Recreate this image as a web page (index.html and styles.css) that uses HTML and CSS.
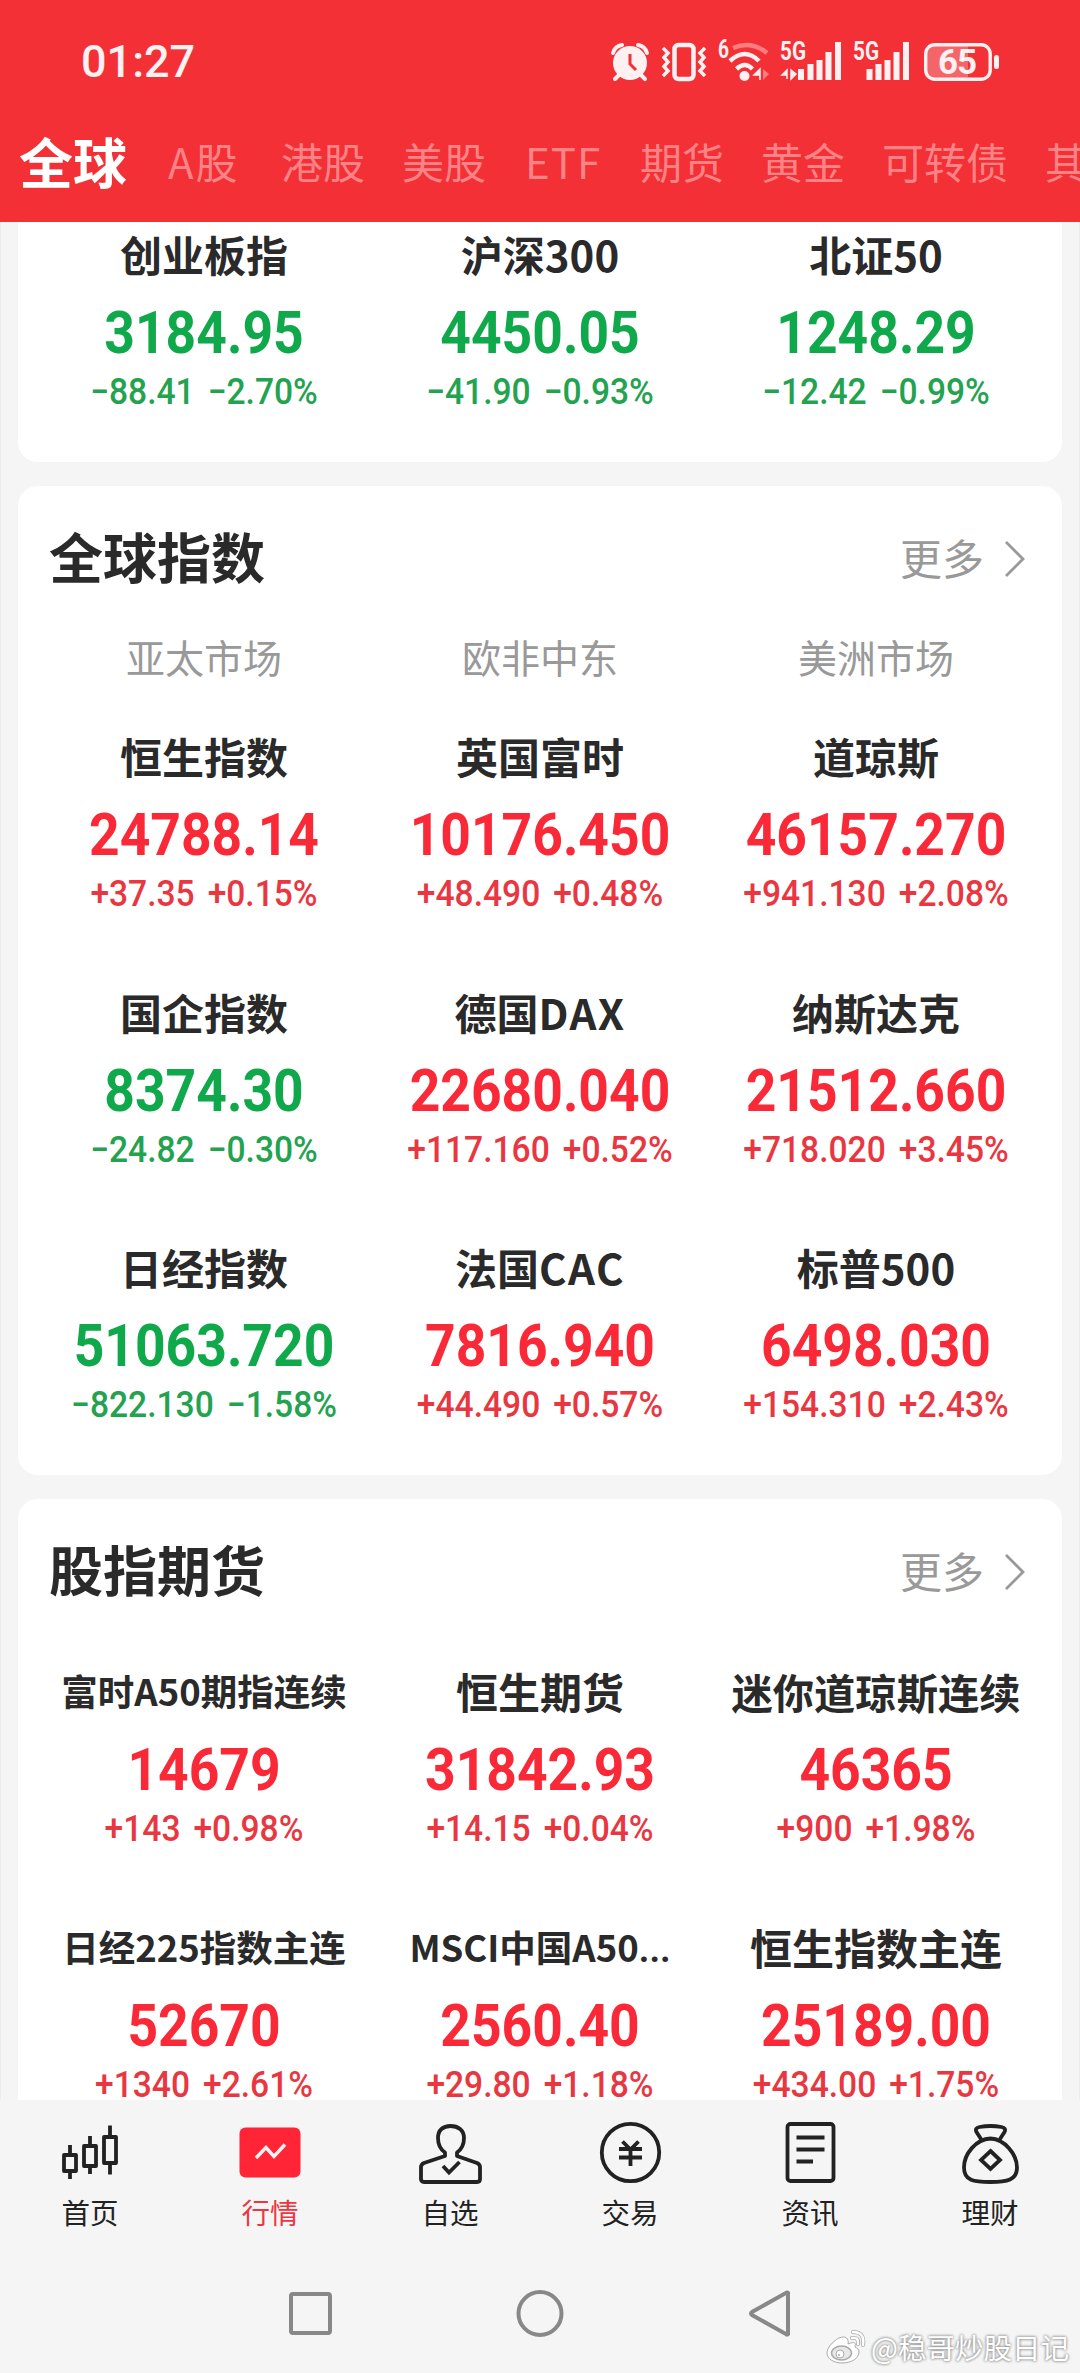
FILE: index.html
```html
<!DOCTYPE html>
<html lang="zh-CN">
<head>
  <meta charset="UTF-8" />
  <title>行情 - 全球</title>
  <link rel="stylesheet" href="styles.css">
</head>
<body>
  <header class="header">
    <div class="status">
      <span class="time">01:27</span>
      <div class="status-icons">
        <svg class="i-alarm" width="38" height="38" viewBox="0 0 38 38">
          <circle cx="19" cy="20" r="17" fill="#fff0f1"/>
          <path d="M2 10Q4 3 11 2M36 10Q34 3 27 2M8 32l-4 4M30 32l4 4" stroke="#fff0f1" stroke-width="4" fill="none" stroke-linecap="round"/>
          <path d="M19 11v10l6 6" stroke="#f23035" stroke-width="3" fill="none"/>
        </svg>
        <svg class="i-vibrate" width="46" height="38" viewBox="0 0 46 38">
          <rect x="13.500" y="2" width="19" height="34" rx="4" fill="none" stroke="#fff0f1" stroke-width="4.500"/>
          <path d="M2 5l5 5-4 4.500 4 4.500-4 4.500 4 4.500-5 5M44 5l-5 5 4 4.500-4 4.500 4 4.500-4 4.500 5 5" fill="none" stroke="#fff0f1" stroke-width="3.500"/>
        </svg>
        <svg class="i-wifi" width="52" height="42" viewBox="0 0 52 42">
          <text x="0" y="17" class="tiny" textLength="11" lengthAdjust="spacingAndGlyphs">6</text>
          <path d="M15 7Q33-1 49 12" fill="none" stroke="#ff7d80" stroke-width="4.500"/>
          <path d="M12 20Q27 6 41 20M18.500 28Q27 20 34.500 28" fill="none" stroke="#fff0f1" stroke-width="4.500"/>
          <circle cx="26.500" cy="35" r="5" fill="#fff0f1"/>
          <path d="M42 39V28l-6 6h5" fill="#fff0f1" stroke="#fff0f1" stroke-width="1.500"/>
          <path d="M45 28v11l6-6z" fill="#ff7d80"/>
        </svg>
        <svg class="i-signal" width="62" height="39" viewBox="0 0 62 39">
          <text x="0" y="18" class="tiny" textLength="26" lengthAdjust="spacingAndGlyphs">5G</text>
          <path d="M7 37V28l-5 5h5M11 28v9l5-5z" fill="#fff0f1" stroke="#fff0f1" stroke-width="1.500"/>
          <path d="M21 38V27M30.500 38V22M39.500 38V18M48.500 38V10M58 38V0" stroke="#fff0f1" stroke-width="6"/>
        </svg>
        <svg class="i-signal" width="57" height="39" viewBox="0 0 57 39">
          <text x="0" y="18" class="tiny" textLength="26" lengthAdjust="spacingAndGlyphs">5G</text>
          <path d="M16.500 38V27M25.500 38V22M34.500 38V18M43.500 38V10M53 38V0" stroke="#fff0f1" stroke-width="6"/>
        </svg>
        <svg class="i-battery" width="76" height="38" viewBox="0 0 76 38">
          <path d="M10 2h34v34H10q-8 0-8-8V10q0-8 8-8" fill="#f46569"/>
          <rect x="1.700" y="1.700" width="64.500" height="34.600" rx="9" fill="none" stroke="#fff0f1" stroke-width="3.400"/>
          <rect x="70" y="12" width="5" height="14" rx="2.500" fill="#fff0f1"/>
          <text x="14" y="31" class="level" textLength="39">65</text>
        </svg>
      </div>
    </div>
    <nav class="tabs">
      <span class="tab on">全球</span>
      <span class="tab a">A股</span>
      <span class="tab">港股</span>
      <span class="tab">美股</span>
      <span class="tab etf">ETF</span>
      <span class="tab">期货</span>
      <span class="tab">黄金</span>
      <span class="tab">可转债</span>
      <span class="tab">其</span>
    </nav>
  </header>

  <main class="content">
    <section class="card first">
      <div class="grid">
        <div class="quote down"><p class="name">创业板指</p><p class="price">3184.95</p><p class="chg">−88.41 −2.70%</p></div>
        <div class="quote down"><p class="name">沪深300</p><p class="price">4450.05</p><p class="chg">−41.90 −0.93%</p></div>
        <div class="quote down"><p class="name">北证50</p><p class="price">1248.29</p><p class="chg">−12.42 −0.99%</p></div>
      </div>
    </section>

    <section class="card">
      <div class="card-head">
        <h2>全球指数</h2>
        <span class="more">更多 <svg width="22" height="38" viewBox="0 0 22 38"><path d="M2 2l17 17L2 36" fill="none" stroke="#999" stroke-width="2.800"/></svg></span>
      </div>
      <div class="regions"><span>亚太市场</span><span>欧非中东</span><span>美洲市场</span></div>
      <div class="grid">
        <div class="quote up"><p class="name">恒生指数</p><p class="price">24788.14</p><p class="chg">+37.35 +0.15%</p></div>
        <div class="quote up"><p class="name">英国富时</p><p class="price">10176.450</p><p class="chg">+48.490 +0.48%</p></div>
        <div class="quote up"><p class="name">道琼斯</p><p class="price">46157.270</p><p class="chg">+941.130 +2.08%</p></div>
        <div class="quote down"><p class="name">国企指数</p><p class="price">8374.30</p><p class="chg">−24.82 −0.30%</p></div>
        <div class="quote up"><p class="name">德国<span class="en">DAX</span></p><p class="price">22680.040</p><p class="chg">+117.160 +0.52%</p></div>
        <div class="quote up"><p class="name">纳斯达克</p><p class="price">21512.660</p><p class="chg">+718.020 +3.45%</p></div>
        <div class="quote down"><p class="name">日经指数</p><p class="price">51063.720</p><p class="chg">−822.130 −1.58%</p></div>
        <div class="quote up"><p class="name">法国<span class="en">CAC</span></p><p class="price">7816.940</p><p class="chg">+44.490 +0.57%</p></div>
        <div class="quote up"><p class="name">标普500</p><p class="price">6498.030</p><p class="chg">+154.310 +2.43%</p></div>
      </div>
    </section>

    <section class="card futures">
      <div class="card-head">
        <h2>股指期货</h2>
        <span class="more">更多 <svg width="22" height="38" viewBox="0 0 22 38"><path d="M2 2l17 17L2 36" fill="none" stroke="#999" stroke-width="2.800"/></svg></span>
      </div>
      <div class="grid">
        <div class="quote up"><p class="name small">富时A50期指连续</p><p class="price">14679</p><p class="chg">+143 +0.98%</p></div>
        <div class="quote up"><p class="name">恒生期货</p><p class="price">31842.93</p><p class="chg">+14.15 +0.04%</p></div>
        <div class="quote up"><p class="name long">迷你道琼斯连续</p><p class="price">46365</p><p class="chg">+900 +1.98%</p></div>
        <div class="quote up"><p class="name small">日经225指数主连</p><p class="price">52670</p><p class="chg">+1340 +2.61%</p></div>
        <div class="quote up"><p class="name small">MSCI中国A50<span class="dots">...</span></p><p class="price">2560.40</p><p class="chg">+29.80 +1.18%</p></div>
        <div class="quote up"><p class="name">恒生指数主连</p><p class="price">25189.00</p><p class="chg">+434.00 +1.75%</p></div>
      </div>
    </section>
  </main>

  <footer class="bottom">
    <nav class="menu">
      <a class="item">
        <svg viewBox="0 0 64 64"><path d="M6 35h12v16H6zM12 25v10M12 51v8M26 26h12v20H26zM32 16v10M32 46v8M46 17h12v26H46zM52 5.500V17M52 43v11.500" stroke-linejoin="round"/></svg>
        首页
      </a>
      <a class="item on">
        <svg viewBox="0 0 64 64"><rect x="1.500" y="7.500" width="61" height="50" rx="6" fill="#ff2436" stroke="none"/><path d="M18 38l10-10.500L36 36.500 47 24.500" stroke="#fff0f1" stroke-width="3.500"/></svg>
        行情
      </a>
      <a class="item">
        <svg viewBox="0 0 64 64"><path d="M27 36v-3.500C22 29 20 24 20 18 20 10 25 6 32.500 6S46 10 46 18c0 6-2 11-7 14.500V36L59 43q3 1.500 3 4v12q0 3-3 3H6q-3 0-3-3V47q0-2.500 3-4z" stroke-linejoin="round"/><path d="M25 46l6 6.500L41.500 42"/></svg>
        自选
      </a>
      <a class="item">
        <svg viewBox="0 0 64 64"><circle cx="32.500" cy="32.500" r="28.700"/><path d="M24.500 21.500l8 8 8-8M21 29h23M21 37.500h23M32.500 29v17"/></svg>
        交易
      </a>
      <a class="item">
        <svg viewBox="0 0 64 64"><rect x="9.500" y="4" width="46" height="57" rx="3"/><path d="M18.500 17.500h28M18.500 29.500h28M18.500 41.500H35"/></svg>
        资讯
      </a>
      <a class="item">
        <svg viewBox="0 0 64 64"><path d="M23 19l-4.500-7q-2-4 3-5 11-2 22 0 5 1 3 5l-4.500 7M32.500 18.500C18 19 6 34 6 47.500S16 62 32.500 62 59 60 59 47.500 47 19 32.500 18.500z"/><path d="M32.500 31L42 40l-9.500 9L23 40z"/></svg>
        理财
      </a>
    </nav>
    <div class="sysnav">
      <svg viewBox="0 0 48 48"><rect x="4" y="4" width="39" height="39" rx="2"/></svg>
      <svg viewBox="0 0 48 48"><circle cx="24" cy="23.500" r="21.500"/></svg>
      <svg viewBox="0 0 48 48"><path d="M43 3v41q-1 1-2 0L7 25q-2-1.500 0-3L41 3q1-1 2 0z"/></svg>
    </div>
    <div class="watermark">
      <svg width="40" height="34" viewBox="0 0 40 34">
        <path d="M13 8C6 12 1 18 1 23c0 6 7 10 15 10 10 0 17-5 17-11 0-3-2-4-4-5 1-4 0-6-7-3 1-5-2-9-9-6z" fill="#fff" stroke="#aaa" stroke-width="1"/>
        <ellipse cx="15.500" cy="23" rx="10" ry="7" fill="#e8e8e8" stroke="#aaa" stroke-width="1.500"/>
        <circle cx="14" cy="24" r="4" fill="#fff" stroke="#aaa"/>
        <circle cx="13" cy="25" r="1" fill="#aaa"/>
        <path d="M27 2Q39 2 37 15M26 8Q33 7 32 14" fill="none" stroke="#aaa" stroke-width="4" stroke-linecap="round"/>
        <path d="M27 2Q39 2 37 15M26 8Q33 7 32 14" fill="none" stroke="#fff" stroke-width="2.500" stroke-linecap="round"/>
      </svg>
      @稳哥炒股日记
    </div>
  </footer>
</body>
</html>
```
FILE: styles.css
```css
* { box-sizing: border-box; margin: 0; padding: 0; }
body { width: 1080px; height: 2373px; overflow: hidden; display: flex; flex-direction: column; background: #f5f5f5; color: #2a2a2a; font-family: "Noto Sans CJK SC", sans-serif; }

.header { height: 222px; background: #f23035; flex: none; overflow: hidden; }
.status { height: 122px; display: flex; justify-content: space-between; align-items: center; padding: 0 80px 0 81px; color: #fff0f1; }
.time { font: 500 45px/50px Roboto, sans-serif; padding-top: 2px; }
.status-icons { display: flex; align-items: center; padding-top: 1px; }
.status-icons svg { overflow: visible; }
.i-vibrate { margin-left: 12px; }
.i-wifi { margin-left: 11px; }
.i-signal { margin-left: 11px; }
.i-wifi + .i-signal { margin-left: 10px; }
.i-battery { margin-left: 14px; }
.tiny { font: 700 25px Roboto, sans-serif; fill: #fff0f1; }
.level { font: 700 35px Roboto, sans-serif; fill: #fff0f1; }

.tabs { display: flex; align-items: center; gap: 37px; height: 77px; padding-left: 19px; white-space: nowrap; }
.tab { font-size: 42px; line-height: 60px; color: #ff8386; flex: none; }
.tab.on { font-size: 54px; font-weight: 700; color: #fff; }
.tab.a { width: 76px; margin-left: 4px; letter-spacing: 2px; }
.tab.etf { width: 80px; letter-spacing: 1px; text-indent: 2px; }

.content { flex: 1; min-height: 0; overflow: hidden; padding: 0 17px; border: solid #ececec; border-width: 0 1px; }
.card { background: #fff; border-radius: 20px; margin-bottom: 24px; padding: 0 18px 46px; overflow: hidden; }
.card.first { border-radius: 0 0 20px 20px; padding-top: 5px; }
.card-head { display: flex; justify-content: space-between; align-items: center; height: 144px; padding: 0 18px 0 13px; }
.card-head h2 { font-size: 54px; font-weight: 700; line-height: 80px; margin-top: -4px; }
.more { display: flex; align-items: center; gap: 20px; font-size: 42px; line-height: 56px; height: 56px; color: #999; margin-top: -2px; }
.more svg { margin-top: 3px; }
.regions { display: grid; grid-template-columns: repeat(3, 1fr); height: 56px; line-height: 52px; text-align: center; font-size: 39px; color: #999; }
.regions + .grid { margin-top: 43px; }
.futures .grid { margin-top: 21px; }

.grid { display: grid; grid-template-columns: repeat(3, 1fr); row-gap: 66.500px; }
.quote { text-align: center; white-space: nowrap; }
.name { font-size: 42px; font-weight: 700; line-height: 54px; height: 60px; }
.name.long { font-size: 41.300px; }
.name.small { font-size: 36.500px; }
.en { letter-spacing: 1.5px; }
.dots { font-family: Roboto, sans-serif; }
.price { font: 700 59px/70px Roboto, sans-serif; margin-top: 11px; transform: scaleX(0.905); }
.chg { font: 500 36.500px/48px Roboto, sans-serif; word-spacing: 5px; transform: scaleX(0.92); }
.up .price { color: #fa2938; }
.up .chg { color: #e93742; }
.down .price { color: #0fa84a; }
.down .chg { color: #23a350; }

.bottom { flex: none; height: 273px; background: #f5f5f5; position: relative; }
.menu { display: flex; height: 136px; }
.item { flex: 1; display: flex; flex-direction: column; align-items: center; padding-top: 20px; font-size: 28.500px; line-height: 55px; color: #222; }
.item svg { width: 64px; height: 64px; fill: none; stroke: #222; stroke-width: 3.800; flex: none; }
.item.on { color: #ec3742; }
.sysnav { display: flex; justify-content: center; gap: 181px; padding-top: 54px; }
.sysnav svg { width: 48px; height: 48px; fill: none; stroke: #888; stroke-width: 4; }
.watermark { position: absolute; right: 11px; bottom: 4px; display: flex; align-items: center; gap: 5px; font-size: 28.500px; line-height: 44px; color: #fff; text-shadow: 0 0 3px #888, 0 0 3px #999; }
```
